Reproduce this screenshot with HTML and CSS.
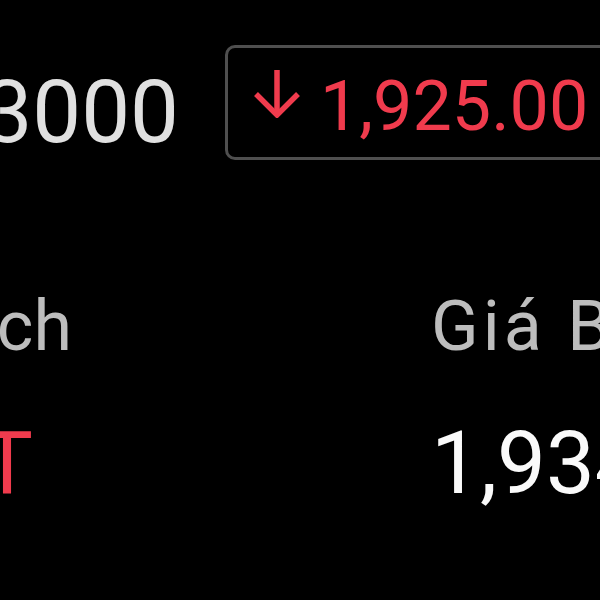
FILE: index.html
```html
<!DOCTYPE html>
<html>
<head lang="vi">
    <meta charset="UTF-8">
    <title>Giá</title>
    <link rel="stylesheet" href="styles.css">
</head>
<body>
    <div id="screen">
        <div class="head-row">
            <div class="head-qty"><span>3000</span></div>
            <div class="change-box">
                <svg class="arrow-down" width="50" height="50" viewBox="0 0 50 50">
                    <path d="M25 2 V46" />
                    <path d="M4 26 L25 47 L46 26" />
                </svg>
                <span class="change-val">1,925.00</span>
            </div>
        </div>

        <div class="row label-row">
            <div class="cell-l pad-label"><span>ch</span></div>
            <div class="cell-r label-r">Giá B</div>
        </div>
        <div class="row value-row">
            <div class="cell-l pad-value"><span class="red">T</span></div>
            <div class="cell-r value-r">1,934</div>
        </div>
    </div>
</body>
</html>
```

FILE: styles.css
```css
*{
    padding: 0;
    margin: 0;
}
html, body{
    background: #000000;
    overflow: hidden;
}
#screen{
    width: 600px;
    height: 600px;
    font-family: Roboto, "Noto Sans", sans-serif;
    white-space: nowrap;
    overflow: hidden;
}
.head-row{
    display: flex;
    align-items: flex-start;
    margin-top: 45px;
}
.head-qty{
    width: 179px;
    flex-shrink: 0;
    display: flex;
    justify-content: flex-end;
    margin-top: 24px;
    margin-right: 46px;
    font-size: 87px;
    line-height: 87px;
    color: #e0e0e0;
}
.change-box{
    flex-shrink: 0;
    display: flex;
    align-items: flex-start;
    border: 3px solid #4f4f4f;
    border-radius: 10px;
    padding: 23px 24px 16px 24px;
}
.arrow-down{
    margin-top: -3px;
    margin-right: 18px;
    fill: none;
    stroke: #f03b4d;
    stroke-width: 5.5;
}
.change-val{
    font-size: 70px;
    line-height: 70px;
    color: #f03b4d;
}
.row{
    display: grid;
    grid-template-columns: 430px auto;
}
.cell-l{
    display: flex;
    justify-content: flex-end;
    overflow: visible;
}
.label-row{
    margin-top: 131px;
    font-size: 70px;
    line-height: 70px;
    color: #bdbdbd;
}
.value-row{
    margin-top: 59px;
    font-size: 87px;
    line-height: 87px;
}
.pad-label{
    padding-right: 358px;
}
.pad-value{
    padding-right: 397px;
}
.label-r{
    padding-left: 1px;
    letter-spacing: 4px;
}
.value-r{
    padding-left: 1px;
    color: #fafafa;
}
.red{
    color: #f03b4d;
}
```
